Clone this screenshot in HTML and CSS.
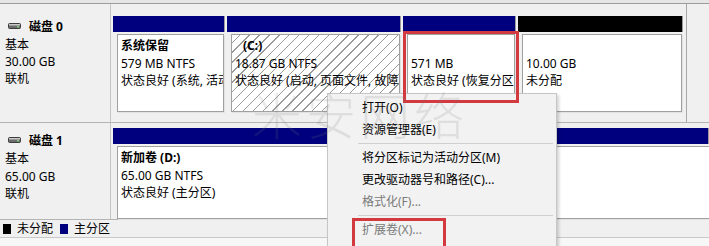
FILE: index.html
```html
<!DOCTYPE html>
<html lang="zh-CN">
<head>
<meta charset="utf-8">
<title>磁盘管理</title>
<link rel="stylesheet" href="styles.css">
</head>
<body>
<div class="screen">
  <div class="topbar"></div>

  <div class="disk disk0">
    <div class="disk-info">
      <div class="disk-title">
        <svg class="disk-icon" width="13" height="6" viewBox="0 0 13 6"><rect x="0.5" y="0.5" width="12" height="5" rx="1" fill="#6a6a6a" stroke="#3c3c3c"/><rect x="1" y="1" width="11" height="1.5" fill="#c8c8c8"/><rect x="9" y="3" width="2" height="1.5" fill="#7fd07f"/></svg>
        <b>磁盘 0</b>
      </div>
      <div class="info-line">基本</div>
      <div class="info-line">30.00 GB</div>
      <div class="info-line">联机</div>
    </div>
    <div class="parts">
      <div class="part p-sys">
        <div class="bar"></div>
        <div class="box">
          <div class="line"><b>系统保留</b></div>
          <div class="line">579 MB NTFS</div>
          <div class="line clip">状态良好 (系统, 活动, 主分区)</div>
        </div>
      </div>
      <div class="part p-c">
        <div class="bar"></div>
        <div class="box hatched">
          <div class="line"><b class="indent">(C:)</b></div>
          <div class="line">18.87 GB NTFS</div>
          <div class="line clip">状态良好 (启动, 页面文件, 故障转储, 主分区)</div>
        </div>
      </div>
      <div class="part p-rec">
        <div class="bar"></div>
        <div class="box">
          <div class="line">&nbsp;</div>
          <div class="line">571 MB</div>
          <div class="line clip">状态良好 (恢复分区)</div>
        </div>
      </div>
      <div class="part p-free">
        <div class="bar black"></div>
        <div class="box">
          <div class="line">&nbsp;</div>
          <div class="line">10.00 GB</div>
          <div class="line">未分配</div>
        </div>
      </div>
    </div>
  </div>

  <div class="disk disk1">
    <div class="disk-info">
      <div class="disk-title">
        <svg class="disk-icon" width="13" height="6" viewBox="0 0 13 6"><rect x="0.5" y="0.5" width="12" height="5" rx="1" fill="#6a6a6a" stroke="#3c3c3c"/><rect x="1" y="1" width="11" height="1.5" fill="#c8c8c8"/><rect x="9" y="3" width="2" height="1.5" fill="#7fd07f"/></svg>
        <b>磁盘 1</b>
      </div>
      <div class="info-line">基本</div>
      <div class="info-line">65.00 GB</div>
      <div class="info-line">联机</div>
    </div>
    <div class="parts open">
      <div class="part p-d">
        <div class="bar"></div>
        <div class="box">
          <div class="line"><b>新加卷 (D:)</b></div>
          <div class="line">65.00 GB NTFS</div>
          <div class="line">状态良好 (主分区)</div>
        </div>
      </div>
    </div>
  </div>

  <div class="legend">
    <span class="swatch black"></span><span class="legend-text">未分配</span>
    <span class="swatch blue"></span><span class="legend-text">主分区</span>
  </div>
  <div class="bottom"></div>

  <div class="menu">
    <div class="item">打开(O)</div>
    <div class="item">资源管理器(E)</div>
    <div class="sep"></div>
    <div class="item">将分区标记为活动分区(M)</div>
    <div class="item">更改驱动器号和路径(C)...</div>
    <div class="item disabled">格式化(F)...</div>
    <div class="sep"></div>
    <div class="item disabled">扩展卷(X)...</div>
  </div>

  <div class="mark mark-rec"></div>
  <div class="mark mark-extend"></div>
  <div class="watermark">米安网络</div>
</div>
</body>
</html>
```

FILE: styles.css
```css
* { box-sizing: border-box; }

html, body {
  margin: 0;
  padding: 0;
}

body {
  width: 709px;
  height: 246px;
  overflow: hidden;
  background: #f0f0f0;
  font-family: "Noto Sans", "Noto Sans CJK SC", sans-serif;
  font-size: 12px;
  color: #000;
}

.screen {
  position: relative;
  width: 709px;
  height: 246px;
  overflow: hidden;
}

.topbar {
  height: 4px;
  background: #e6e6e6;
  border-bottom: 1px solid #9c9c9c;
}

.disk {
  display: flex;
  border-bottom: 1px solid #b4b4b4;
}

.disk0 { height: 119px; }
.disk1 { height: 97px; }

.disk-info {
  width: 111px;
  flex: none;
  border-right: 1px solid #c4c4c4;
  padding-left: 5px;
  background: #f0f0f0;
}

.disk0 .disk-info { padding-top: 12px; }
.disk1 .disk-info { padding-top: 7px; }

.disk-title {
  height: 20px;
  display: flex;
  align-items: center;
  gap: 8px;
  padding-left: 3px;
}

.disk-title b { font-weight: 700; }

.disk-icon { flex: none; }

.info-line {
  height: 17px;
  line-height: 17px;
  white-space: nowrap;
}

.disk1 .info-line { height: 17.5px; line-height: 17.5px; }

.parts {
  display: flex;
  gap: 2px;
  padding-left: 2px;
  padding-right: 3px;
  border-right: 1px solid #a8a8a8;
  width: 576px;
  flex: none;
}

.disk0 .parts { padding-top: 12px; }
.disk1 .parts { padding-top: 5px; }

.parts.open {
  border-right: none;
  padding-right: 0;
  flex: 1;
  width: auto;
}

.part {
  display: flex;
  flex-direction: column;
  flex: none;
}

.p-sys  { width: 112px; }
.p-c    { width: 174px; }
.p-rec  { width: 113px; }
.p-free { width: 165px; }
.p-d    { flex: 1; }

.bar {
  height: 16px;
  background: #00007e;
  border-right: 1px solid #9a9a9a;
}

.bar.black { background: #000; }

.box {
  margin: 2px 1px 0 4px;
  height: 78px;
  background: #fff;
  border: 1px solid #a0a0a0;
  box-shadow: 1px 1px 0 #e2e2e2;
  padding: 2px 0 0 3px;
  overflow: hidden;
}

.disk1 .box {
  height: 73px;
  margin-right: 0;
  border-right: none;
}

.box.hatched {
  background:
    repeating-linear-gradient(135deg, #fff 0 5px, #9a9a9a 5px 6px, #fff 6px 7px);
}

.line {
  height: 17.5px;
  line-height: 17.5px;
  white-space: nowrap;
  overflow: hidden;
}

.line b { font-weight: 700; }

.indent { margin-left: 8px; }

.legend {
  height: 18px;
  display: flex;
  align-items: center;
  padding-left: 3px;
  background: #f0f0f0;
  border-bottom: 1px solid #c8c8c8;
}

.swatch {
  width: 8px;
  height: 10px;
  margin-right: 6px;
  flex: none;
}

.swatch.black { background: #000; }
.swatch.blue { background: #00007e; margin-left: 7px; }

.legend-text { line-height: 18px; }

.bottom {
  height: 10px;
  background: #f7f7f7;
}

.menu {
  position: absolute;
  left: 327px;
  top: 93px;
  width: 230px;
  height: 160px;
  background: #f2f2f2;
  border: 1px solid #c6c6c6;
  box-shadow: 2px 2px 3px rgba(0,0,0,0.18);
  padding: 3px 3px 0 2px;
}

.item {
  height: 22px;
  line-height: 22px;
  padding-left: 32px;
  white-space: nowrap;
}

.item.disabled { color: #7a7a7a; }

.sep {
  height: 6px;
  margin-left: 28px;
  position: relative;
}

.sep::after {
  content: "";
  position: absolute;
  left: 0;
  right: 0;
  top: 2px;
  border-top: 1px solid #cfcfcf;
}

.mark {
  position: absolute;
  border: 3px solid #d23a40;
}

.mark-rec {
  left: 403px;
  top: 31px;
  width: 116px;
  height: 72px;
}

.mark-extend {
  left: 352px;
  top: 218px;
  width: 94px;
  height: 40px;
}

.watermark {
  position: absolute;
  left: 252px;
  top: 86px;
  font-size: 50px;
  letter-spacing: 4px;
  line-height: 60px;
  font-weight: 300;
  color: rgba(120, 120, 120, 0.16);
  white-space: nowrap;
  pointer-events: none;
}
```
